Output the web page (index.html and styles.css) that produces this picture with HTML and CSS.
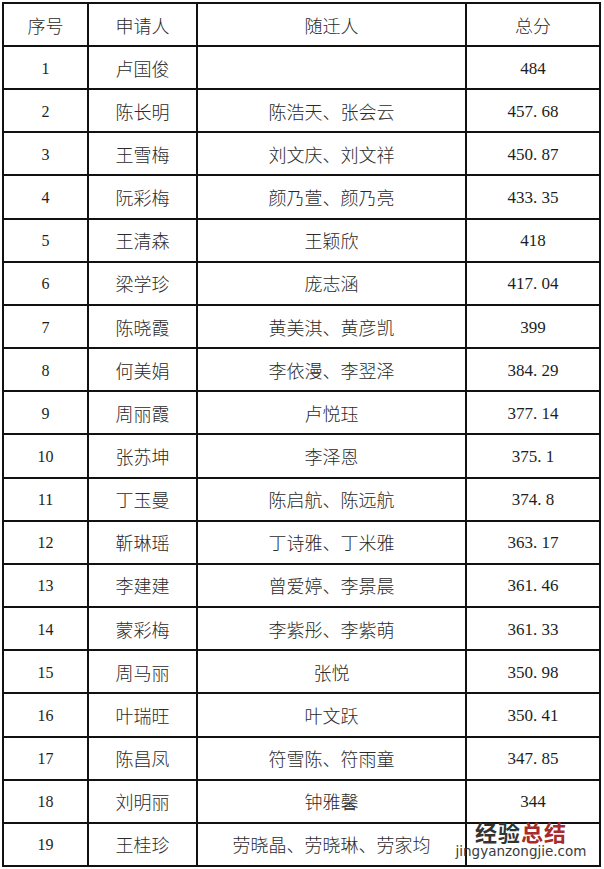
FILE: index.html
```html
<!DOCTYPE html>
<html lang="zh-CN">
<head>
<meta charset="utf-8">
<title>积分表</title>
<link rel="stylesheet" href="styles.css">
</head>
<body>
<div class="page">
<table class="score-table">
<colgroup>
<col class="c-no"><col class="c-name"><col class="c-family"><col class="c-score">
</colgroup>
<thead>
<tr><th>序号</th><th>申请人</th><th>随迁人</th><th>总分</th></tr>
</thead>
<tbody>
<tr><td class="num">1</td><td>卢国俊</td><td></td><td class="num score">484</td></tr>
<tr><td class="num">2</td><td>陈长明</td><td>陈浩天、张会云</td><td class="num score">457. 68</td></tr>
<tr><td class="num">3</td><td>王雪梅</td><td>刘文庆、刘文祥</td><td class="num score">450. 87</td></tr>
<tr><td class="num">4</td><td>阮彩梅</td><td>颜乃萱、颜乃亮</td><td class="num score">433. 35</td></tr>
<tr><td class="num">5</td><td>王清森</td><td>王颖欣</td><td class="num score">418</td></tr>
<tr><td class="num">6</td><td>梁学珍</td><td>庞志涵</td><td class="num score">417. 04</td></tr>
<tr><td class="num">7</td><td>陈晓霞</td><td>黄美淇、黄彦凯</td><td class="num score">399</td></tr>
<tr><td class="num">8</td><td>何美娟</td><td>李依漫、李翌泽</td><td class="num score">384. 29</td></tr>
<tr><td class="num">9</td><td>周丽霞</td><td>卢悦珏</td><td class="num score">377. 14</td></tr>
<tr><td class="num">10</td><td>张苏坤</td><td>李泽恩</td><td class="num score">375. 1</td></tr>
<tr><td class="num">11</td><td>丁玉曼</td><td>陈启航、陈远航</td><td class="num score">374. 8</td></tr>
<tr><td class="num">12</td><td>靳琳瑶</td><td>丁诗雅、丁米雅</td><td class="num score">363. 17</td></tr>
<tr><td class="num">13</td><td>李建建</td><td>曾爱婷、李景晨</td><td class="num score">361. 46</td></tr>
<tr><td class="num">14</td><td>蒙彩梅</td><td>李紫彤、李紫萌</td><td class="num score">361. 33</td></tr>
<tr><td class="num">15</td><td>周马丽</td><td>张悦</td><td class="num score">350. 98</td></tr>
<tr><td class="num">16</td><td>叶瑞旺</td><td>叶文跃</td><td class="num score">350. 41</td></tr>
<tr><td class="num">17</td><td>陈昌凤</td><td>符雪陈、符雨童</td><td class="num score">347. 85</td></tr>
<tr><td class="num">18</td><td>刘明丽</td><td>钟雅馨</td><td class="num score">344</td></tr>
<tr><td class="num">19</td><td>王桂珍</td><td>劳晓晶、劳晓琳、劳家均</td><td class="num score"></td></tr>
</tbody>
</table>
<div class="watermark">
<div class="wm-title"><span class="wm-dark">经验</span><span class="wm-red">总结</span></div>
<div class="wm-url">jingyanzongjie.com</div>
</div>
</div>
</body>
</html>
```
FILE: styles.css
```css
html, body {
  margin: 0;
  padding: 0;
  background: #ffffff;
}
.page {
  position: relative;
  width: 604px;
  height: 869px;
  padding: 2px 0 0 2px;
  box-sizing: border-box;
  overflow: hidden;
}
.score-table {
  border-collapse: collapse;
  table-layout: fixed;
  width: 599px;
  color: #1e1e1e;
}
.c-no { width: 85px; }
.c-name { width: 109px; }
.c-family { width: 269px; }
.c-score { width: 134px; }
.score-table th,
.score-table td {
  border: 2px solid #111;
  height: 39.17px;
  padding: 0;
  line-height: 24px;
  text-align: center;
  vertical-align: middle;
  font-size: 18px;
  font-weight: 300;
  font-family: "Noto Sans CJK SC", sans-serif;
  color: #2a2a2a;
}
.score-table th {
  height: 41px;
}
.score-table td.num {
  font-family: "Liberation Serif", serif;
  font-size: 16px;
  font-weight: 400;
  color: #1e1e1e;
  padding-top: 2px;
}
.score-table td.score {
  font-size: 17px;
}
.watermark {
  position: absolute;
  left: 451px;
  top: 818px;
  width: 140px;
  text-align: center;
  font-family: "Noto Sans CJK SC", sans-serif;
}
.wm-title {
  font-size: 22px;
  font-weight: 700;
  line-height: 26px;
  letter-spacing: 1px;
}
.wm-dark { color: #333333; }
.wm-red { color: #a82a2a; }
.wm-url {
  font-family: "DejaVu Sans", sans-serif;
  font-size: 13.5px;
  line-height: 14px;
  color: #3a3a3a;
}
```
